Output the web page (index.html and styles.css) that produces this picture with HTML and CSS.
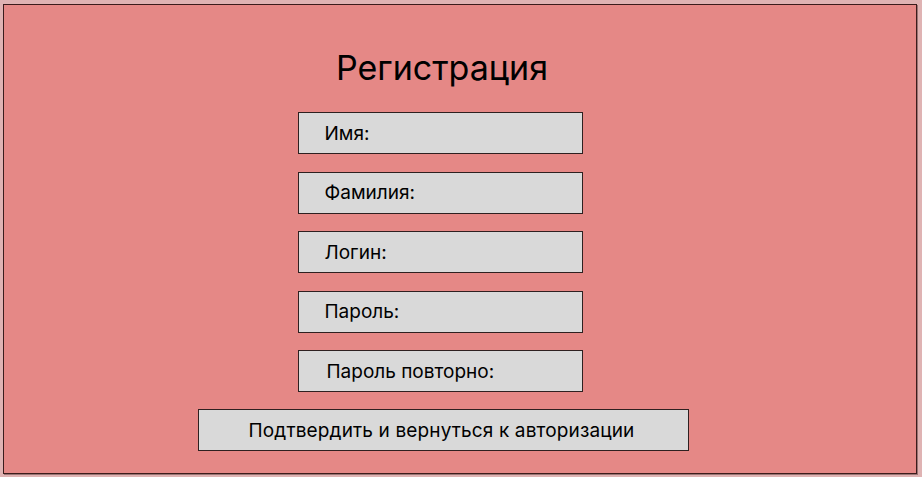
FILE: index.html
```html
<!DOCTYPE html>
<html lang="ru">
<head>
<meta charset="utf-8">
<title>Регистрация</title>
<link rel="stylesheet" href="styles.css">
</head>
<body>
<div class="frame">
  <h1 class="title">Регистрация</h1>
  <div class="fields">
    <div class="field">Имя:</div>
    <div class="field">Фамилия:</div>
    <div class="field">Логин:</div>
    <div class="field">Пароль:</div>
    <div class="field field-wide-pad">Пароль повторно:</div>
  </div>
  <button class="submit">Подтвердить и вернуться к авторизации</button>
</div>
</body>
</html>
```

FILE: styles.css
```css
html, body {
  margin: 0;
  padding: 0;
}
body {
  background: #dfb3b3;
  font-family: Inter, "Noto Sans", sans-serif;
  color: #000;
  width: 922px;
  height: 477px;
  overflow: hidden;
}
.frame {
  box-sizing: border-box;
  margin: 4px 0 0 3px;
  width: 914px;
  height: 470px;
  border: 1px solid #3b1c1c;
  background: #e58886;
  display: flex;
  flex-direction: column;
  align-items: center;
  padding-top: 43px;
  padding-right: 36px;
  box-shadow: 1px 1px 0 #9a7474;
}
.title {
  margin: 0;
  font-size: 34px;
  font-weight: 400;
  line-height: 40px;
  height: 40px;
}
.fields {
  margin-top: 24px;
  display: flex;
  flex-direction: column;
  gap: 17.5px;
  margin-left: -4px;
}
.field {
  box-sizing: border-box;
  width: 285px;
  height: 42px;
  border: 1px solid #2e2020;
  background: #d9d9d9;
  display: flex;
  align-items: center;
  padding-left: 26px;
  font-size: 19px;
  line-height: 23px;
}
.field-wide-pad {
  padding-left: 28px;
}
.submit {
  box-sizing: border-box;
  margin-top: 17px;
  width: 491px;
  height: 42px;
  border: 1px solid #2e2020;
  background: #d9d9d9;
  font-family: inherit;
  font-size: 19px;
  letter-spacing: 0.14px;
  color: #000;
  padding: 0 4px 0 0;
  margin-left: 3px;
}
```
